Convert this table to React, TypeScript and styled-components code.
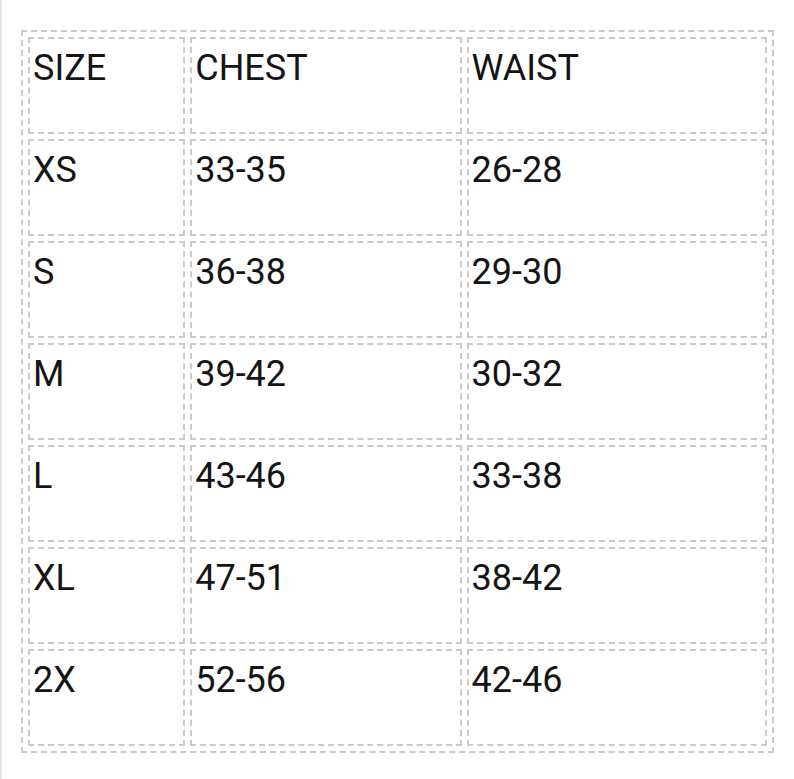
import React from 'react';
import styled, { createGlobalStyle } from 'styled-components';

const GlobalStyle = createGlobalStyle`
  html, body {
    margin: 0;
    padding: 0;
    background: #ffffff;
  }
  body {
    font-family: Roboto, "Liberation Sans", Arial, sans-serif;
  }
`;

const Page = styled.div`
  width: 794px;
  height: 779px;
  box-sizing: border-box;
  border-left: 2px solid #e4e4e4;
  padding: 30px 0 0 19px;
  background: #ffffff;
`;

const Table = styled.table`
  width: 753px;
  table-layout: fixed;
  border-collapse: separate;
  border-spacing: 5px;
  border: 2px dashed #cacaca;
  box-sizing: border-box;
`;

const Cell = styled.td<{ $width: number }>`
  width: ${({ $width }) => $width}px;
  height: 97px;
  box-sizing: border-box;
  border: 2px dashed #cacaca;
  padding: 8px 3px 4px;
  vertical-align: top;
  font-size: 36px;
  line-height: normal;
  color: #141414;
  white-space: nowrap;
`;

const widths = [157, 271, 300];

const rows = [
  ['SIZE', 'CHEST', 'WAIST'],
  ['XS', '33-35', '26-28'],
  ['S', '36-38', '29-30'],
  ['M', '39-42', '30-32'],
  ['L', '43-46', '33-38'],
  ['XL', '47-51', '38-42'],
  ['2X', '52-56', '42-46'],
];

const App: React.FC = () => {
  return (
    <>
      <GlobalStyle />
      <Page>
        <Table>
          <tbody>
            {rows.map((row, i) => (
              <tr key={i}>
                {row.map((text, j) => (
                  <Cell key={j} $width={widths[j]}>
                    {text}
                  </Cell>
                ))}
              </tr>
            ))}
          </tbody>
        </Table>
      </Page>
    </>
  );
};

export default App;
